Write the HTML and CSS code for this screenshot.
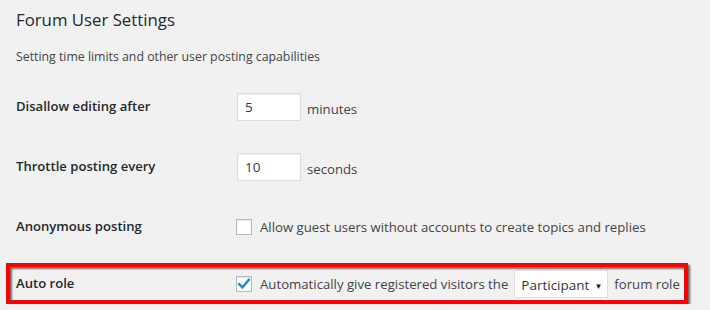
FILE: index.html
```html
<!DOCTYPE html>
<html>
<head>
	<meta charset="utf-8">
	<title>Forum User Settings</title>
	<link rel="stylesheet" href="styles.css">
</head>
<body>
	<div class="wrap">
		<h2 class="title">Forum User Settings</h2>
		<p class="description">Setting time limits and other user posting capabilities</p>

		<div class="form-table">
			<div class="row">
				<div class="label">Disallow editing after</div>
				<div class="field">
					<input class="small-text" type="text" value="5">
					<span class="unit">minutes</span>
				</div>
			</div>

			<div class="row">
				<div class="label">Throttle posting every</div>
				<div class="field">
					<input class="small-text" type="text" value="10">
					<span class="unit">seconds</span>
				</div>
			</div>

			<div class="row">
				<div class="label">Anonymous posting</div>
				<div class="field">
					<span class="checkbox"></span>
					<span class="text">Allow guest users without accounts to create topics and replies</span>
				</div>
			</div>

			<div class="row highlight">
				<div class="label">Auto role</div>
				<div class="field">
					<span class="checkbox checked">
						<svg width="14" height="14" viewBox="0 0 14 14"><path d="M2.2 7.2 L5.4 10.4 L11.8 2.8" fill="none" stroke="#1e8cbe" stroke-width="2.4" stroke-linecap="square"/></svg>
					</span>
					<span class="text">Automatically give registered visitors the</span>
					<span class="select">Participant <span class="arrow">&#9660;</span></span>
					<span class="text">forum role</span>
				</div>
			</div>
		</div>
	</div>
</body>
</html>
```

FILE: styles.css
```css
body {
	background-color: #f1f1f1;
	color: #23282d;
	font-family: "Open Sans", "Noto Sans", sans-serif;
	font-size: 13px;
	margin: 0;
}

.wrap {
	padding: 0 0 0 16px;
}

.title {
	font-size: 16.8px;
	font-weight: 400;
	line-height: 24px;
	margin: 0;
	padding-top: 8px;
}

.description {
	color: #444;
	font-size: 12.3px;
	line-height: 20px;
	margin: 0;
	padding-top: 15px;
}

.form-table {
	padding-top: 10px;
}

.row {
	align-items: center;
	display: grid;
	grid-template-columns: 221px 1fr;
	height: 60px;
}

.label {
	font-size: 13.1px;
	font-weight: 600;
	margin-top: -2px;
	white-space: nowrap;
}

.field {
	align-items: center;
	color: #444;
	display: flex;
	font-size: 13.2px;
	white-space: nowrap;
}

.small-text {
	background: #fff;
	border: 1px solid #ddd;
	box-shadow: inset 0 1px 2px rgba(0, 0, 0, 0.07);
	box-sizing: border-box;
	color: #32373c;
	font-family: inherit;
	font-size: 13.5px;
	height: 28px;
	margin: 0;
	padding: 0 7px;
	width: 64px;
}

.unit {
	margin: 4px 0 0 6px;
}

.checkbox {
	align-items: center;
	background: #fff;
	border: 1px solid #b4b9be;
	box-shadow: inset 0 1px 2px rgba(0, 0, 0, 0.1);
	box-sizing: border-box;
	display: flex;
	flex: none;
	height: 16px;
	justify-content: center;
	margin: 0 8px 0 -1px;
	width: 16px;
}

.checkbox svg {
	display: block;
}

.select {
	align-items: center;
	background: #fff;
	border: 1px solid #ddd;
	box-sizing: border-box;
	color: #32373c;
	display: flex;
	flex: none;
	font-size: 13.5px;
	height: 28px;
	justify-content: space-between;
	margin: 0 6px 0 6px;
	padding: 2px 5px 0 6px;
	width: 94px;
}

.arrow {
	color: #222;
	font-size: 8px;
}

.highlight {
	border: 4px solid #f00;
	box-shadow: 2px 2px 2px rgba(0, 0, 0, 0.6), inset 2px 2px 2px rgba(0, 0, 0, 0.55);
	box-sizing: border-box;
	grid-template-columns: 221px 1fr;
	height: 41px;
	margin: 6px 0 0 -10px;
	padding: 1px 0 0 6px;
	width: 682px;
}
```
